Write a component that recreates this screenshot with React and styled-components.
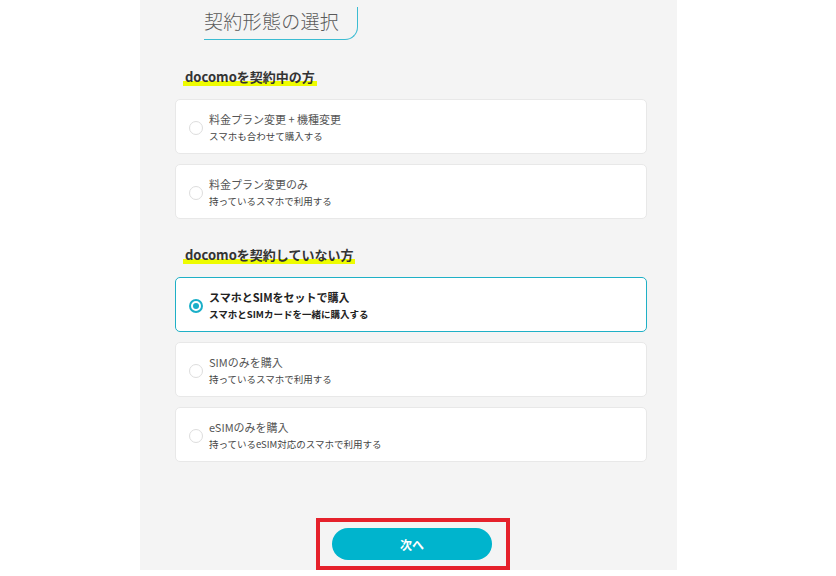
import React from 'react';
import styled, { createGlobalStyle } from 'styled-components';

const GlobalStyle = createGlobalStyle`
    body {
        margin: 0;
        background: #ffffff;
        font-family: "Noto Sans CJK JP", "Noto Sans", sans-serif;
    }
`
const Page = styled.div`
    width: 836px;
    height: 576px;
    overflow: hidden;
`
const Panel = styled.main`
    width: 537px;
    height: 570px;
    margin-left: 140px;
    background-color: #f4f4f4;
    padding: 7px 30px 0 35px;
    box-sizing: border-box;
    display: flex;
    flex-direction: column;
`
const Title = styled.h1`
    align-self: flex-start;
    margin: 0 0 0 29px;
    padding: 1px 18px 6px 0;
    font-size: 19px;
    font-weight: 300;
    line-height: 25px;
    color: #5a5a5a;
    border-right: 1px solid #3bbcd2;
    border-bottom: 1px solid #3bbcd2;
    border-bottom-right-radius: 13px;
    letter-spacing: 0.3px;
`
const Heading = styled.h2`
    margin: ${p => p.$top}px 0 ${p => p.$bottom}px 8px;
    font-size: 13px;
    font-weight: 700;
    line-height: 20px;
    color: #333333;
`
const Marker = styled.span`
    padding: 0 2px;
    background: linear-gradient(transparent 76%, #eefc00 76%);
`
const List = styled.div`
    display: flex;
    flex-direction: column;
    gap: 10px;
`
const Card = styled.label`
    height: 55px;
    box-sizing: border-box;
    display: flex;
    align-items: center;
    gap: 6px;
    padding: 0 13px;
    background: #ffffff;
    border: 1px solid ${p => (p.$checked ? '#1fb0c6' : '#e8e8e8')};
    border-radius: 5px;
    cursor: pointer;
`
const Radio = styled.span`
    width: 14px;
    height: 14px;
    box-sizing: border-box;
    border-radius: 50%;
    border: ${p => (p.$checked ? '2px solid #1aafc8' : '1px solid #dddddd')};
    display: flex;
    align-items: center;
    justify-content: center;
    margin-top: 2px;
    &::after {
        content: "";
        width: 6px;
        height: 6px;
        border-radius: 50%;
        background: ${p => (p.$checked ? '#1aafc8' : 'transparent')};
    }
`
const Texts = styled.div`
    display: flex;
    flex-direction: column;
    gap: 3px;
`
const OptionTitle = styled.span`
    font-size: 11px;
    line-height: 16px;
    color: ${p => (p.$checked ? '#222222' : '#555555')};
    font-weight: ${p => (p.$checked ? 700 : 400)};
`
const OptionSub = styled.span`
    font-size: 9.5px;
    line-height: 13px;
    color: ${p => (p.$checked ? '#222222' : '#444444')};
    font-weight: ${p => (p.$checked ? 700 : 400)};
`
const Footer = styled.div`
    margin-top: 56px;
    display: flex;
    justify-content: center;
    padding-left: 4px;
`
const Highlight = styled.div`
    border: 4px solid #e5212b;
    padding: 6px 14px 6px 12px;
`
const NextButton = styled.button`
    width: 160px;
    height: 32px;
    border: none;
    border-radius: 16px;
    background-color: #00b4cd;
    color: #ffffff;
    font-family: inherit;
    font-size: 12px;
    font-weight: 700;
    cursor: pointer;
`

const current = [
    { id: 'change', title: '料金プラン変更 + 機種変更', sub: 'スマホも合わせて購入する' },
    { id: 'plan', title: '料金プラン変更のみ', sub: '持っているスマホで利用する' },
]
const fresh = [
    { id: 'set', title: 'スマホとSIMをセットで購入', sub: 'スマホとSIMカードを一緒に購入する' },
    { id: 'sim', title: 'SIMのみを購入', sub: '持っているスマホで利用する' },
    { id: 'esim', title: 'eSIMのみを購入', sub: '持っているeSIM対応のスマホで利用する' },
]

function Option({ item, checked, onSelect }) {
    return (
        <Card $checked={checked} onClick={() => onSelect(item.id)}>
            <Radio $checked={checked} />
            <Texts>
                <OptionTitle $checked={checked}>{item.title}</OptionTitle>
                <OptionSub $checked={checked}>{item.sub}</OptionSub>
            </Texts>
        </Card>
    )
}

export default function App() {
    const [selected, setSelected] = React.useState('set')

    return (
        <Page>
            <GlobalStyle />
            <Panel>
                <Title>契約形態の選択</Title>
                <Heading $top={27} $bottom={12}><Marker>docomoを契約中の方</Marker></Heading>
                <List>
                    {current.map(item => (
                        <Option key={item.id} item={item} checked={selected === item.id} onSelect={setSelected} />
                    ))}
                </List>
                <Heading $top={26} $bottom={12}><Marker>docomoを契約していない方</Marker></Heading>
                <List>
                    {fresh.map(item => (
                        <Option key={item.id} item={item} checked={selected === item.id} onSelect={setSelected} />
                    ))}
                </List>
                <Footer>
                    <Highlight>
                        <NextButton>次へ</NextButton>
                    </Highlight>
                </Footer>
            </Panel>
        </Page>
    )
}
